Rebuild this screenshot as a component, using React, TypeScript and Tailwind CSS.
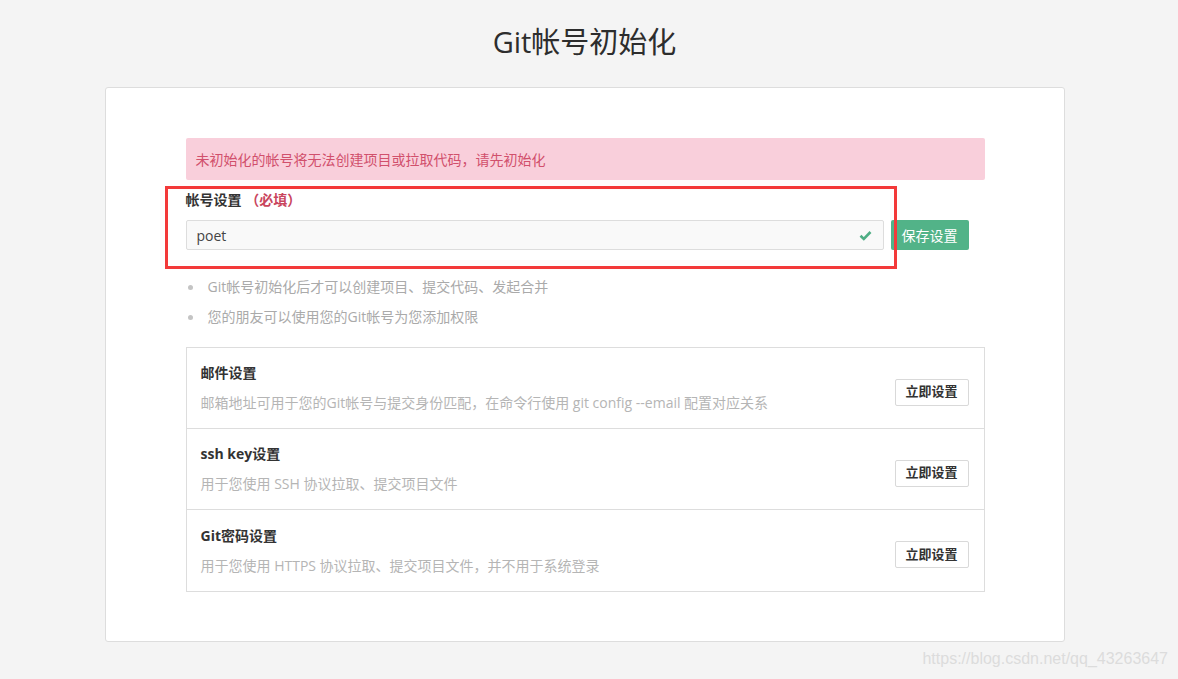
const font = { fontFamily: '"Open Sans", "Noto Sans CJK SC", sans-serif' }

function CheckIcon() {
    return (
        <svg width="13" height="11" viewBox="0 0 13 11" className="absolute right-[11px] top-[9px]">
            <path d="M1.5 5.8 L4.8 9 L11.5 2" stroke="#4fae85" strokeWidth="2.6" fill="none" />
        </svg>
    )
}

function SettingRow({ title, desc, last }: { title: string; desc: string; last?: boolean }) {
    return (
        <div className={`flex items-center justify-between pl-[14px] pr-[15px] h-[81px] ${last ? "" : "border-b border-[#dddddd]"}`}>
            <div className="flex flex-col">
                <div className="text-[14px] leading-[20px] font-bold text-[#333333]">{title}</div>
                <div className="mt-[10px] text-[14px] leading-[20px] text-[#b5b5b5]">{desc}</div>
            </div>
            <button className="mt-[8px] h-[27px] w-[74px] border border-[#d9d9d9] rounded-[2px] bg-white text-[13px] font-bold text-[#333333]">
                立即设置
            </button>
        </div>
    )
}

export default function App() {
    return (
        <div className="min-h-[679px] bg-[#f4f4f4] relative" style={font}>
            <div className="flex flex-col items-center pt-[23px] pr-[9px]">
                <div className="h-[38px] text-[29px] leading-[38px] text-[#2d2d2d]">Git帐号初始化</div>
                <div className="mt-[26px] w-[960px] bg-white border border-[#dddddd] rounded-[3px] pl-[80px] pr-[79px] pt-[50px] pb-[49px]">
                    <div className="h-[42px] bg-[#f9cfdb] rounded-[2px] px-[10px] flex items-center text-[14px] text-[#d1506c]">
                        未初始化的帐号将无法创建项目或拉取代码，请先初始化
                    </div>
                    <div className="mt-[10px] text-[14px] leading-[20px] font-bold text-[#333333]">
                        帐号设置 <span className="text-[#c9455d]">（必填）</span>
                    </div>
                    <div className="mt-[10px] flex items-center">
                        <div className="relative w-[698px] h-[30px] bg-[#f9f9f9] border border-[#dddddd] rounded-[2px] flex items-center pl-[10px] text-[14px] text-[#444444]">
                            poet
                            <CheckIcon />
                        </div>
                        <button className="ml-[7px] h-[30px] w-[78px] bg-[#52b388] rounded-[2px] text-white text-[14px]">
                            保存设置
                        </button>
                    </div>
                    <ul className="mt-[22px] text-[14px] leading-[30px] text-[#aaaaaa]">
                        <li className="flex items-center">
                            <span className="w-[5px] h-[5px] rounded-full bg-[#c4c4c4] ml-[2px] mr-[15px]" />
                            Git帐号初始化后才可以创建项目、提交代码、发起合并
                        </li>
                        <li className="flex items-center">
                            <span className="w-[5px] h-[5px] rounded-full bg-[#c4c4c4] ml-[2px] mr-[15px]" />
                            您的朋友可以使用您的Git帐号为您添加权限
                        </li>
                    </ul>
                    <div className="mt-[15px] border border-[#dddddd]">
                        <SettingRow title="邮件设置" desc="邮箱地址可用于您的Git帐号与提交身份匹配，在命令行使用 git config --email 配置对应关系" />
                        <SettingRow title="ssh key设置" desc="用于您使用 SSH 协议拉取、提交项目文件" />
                        <SettingRow title="Git密码设置" desc="用于您使用 HTTPS 协议拉取、提交项目文件，并不用于系统登录" last />
                    </div>
                </div>
            </div>
            <div className="absolute left-[165px] top-[186px] w-[732px] h-[83px] border-[3px] border-[#f33a3a] pointer-events-none" />
            <div className="absolute right-[10px] bottom-[8px] text-[16px] text-[#dcdcdc]" style={{ fontFamily: '"Liberation Sans", Arial, sans-serif' }}>
                https://blog.csdn.net/qq_43263647
            </div>
        </div>
    )
}
